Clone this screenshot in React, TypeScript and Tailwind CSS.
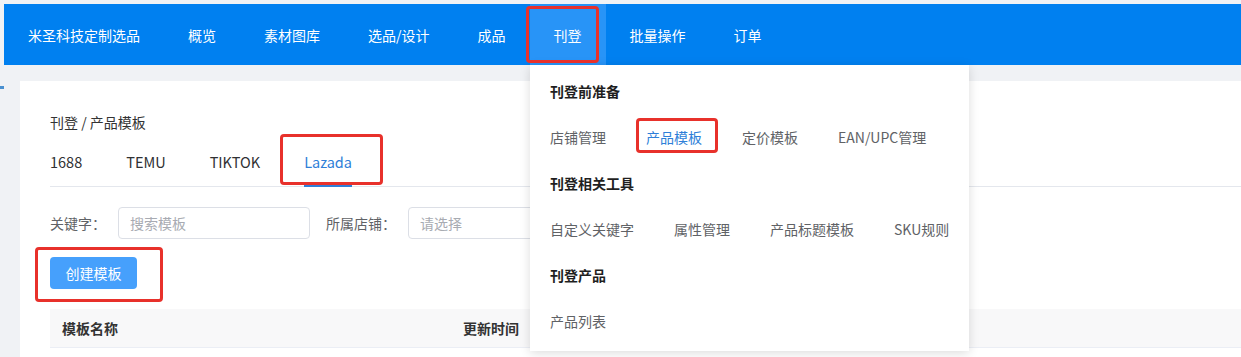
import React from 'react';

const navItems = ['概览', '素材图库', '选品/设计', '成品', '刊登', '批量操作', '订单'];
const platformTabs = ['1688', 'TEMU', 'TIKTOK', 'Lazada'];

const menuGroups = [
    { title: '刊登前准备', items: ['店铺管理', '产品模板', '定价模板', 'EAN/UPC管理'] },
    { title: '刊登相关工具', items: ['自定义关键字', '属性管理', '产品标题模板', 'SKU规则'] },
    { title: '刊登产品', items: ['产品列表'] },
];

// red annotation frame drawn over the screenshot
function Mark({ className }: { className: string }) {
    return <div className={`absolute border-[3px] border-[#e8312b] rounded-[4px] pointer-events-none ${className}`} />;
}

export default function App() {
    return (
        <div
            className="relative w-[1241px] h-[357px] overflow-hidden bg-[#f0f2f5] pt-1 text-[14px] leading-[20px] text-[#333]"
            style={{ fontFamily: '"Noto Sans CJK SC", "Noto Sans", sans-serif' }}
        >
            <header className="ml-1 h-[61px] bg-[#0080f0] flex items-stretch text-white">
                <div className="px-6 flex items-center">米圣科技定制选品</div>
                {navItems.map((item) => (
                    <div key={item} className={`px-6 flex items-center ${item === '刊登' ? 'bg-[#2894f7]' : ''}`}>
                        {item}
                    </div>
                ))}
            </header>

            <div className="flex">
                <div className="w-1 shrink-0">
                    <div className="mt-[21px] h-[3px] bg-[#4a90d0]" />
                </div>
                <div className="flex-1 pl-4 pt-4">
                    <div className="bg-white h-[300px] pl-[30px] pt-[31px]">
                        <div className="text-[#333]">刊登 / 产品模板</div>

                        <div className="mt-[10px] flex gap-[44px] border-b border-[#e4e7ed] text-[14.5px]">
                            {platformTabs.map((tab) => (
                                <div
                                    key={tab}
                                    className={`pt-[10px] pb-[13px] -mb-px border-b-2 ${tab === 'Lazada' ? 'text-[#2f7fd8] border-[#2f7fd8]' : 'text-[#303133] border-transparent'}`}
                                >
                                    {tab}
                                </div>
                            ))}
                        </div>

                        <div className="mt-[20px] flex items-center">
                            <span className="text-[#606266] mr-3">关键字：</span>
                            <div className="w-[192px] h-8 border border-[#dcdfe6] rounded-[4px] pl-[11px] flex items-center text-[#a8abb2]">搜索模板</div>
                            <span className="text-[#606266] ml-4 mr-3">所属店铺：</span>
                            <div className="w-[200px] h-8 border border-[#dcdfe6] rounded-[4px] pl-[11px] flex items-center text-[#a8abb2]">请选择</div>
                        </div>

                        <button className="block mt-[18px] h-8 w-[87px] rounded-[4px] bg-[#46a0fc] text-white">创建模板</button>

                        <div className="mt-[20px] h-[39px] bg-[#f8f8f9] border-b border-[#ebeef5] flex items-center font-bold text-[#333]">
                            <div className="pl-3 w-[413px]">模板名称</div>
                            <div>更新时间</div>
                        </div>
                    </div>
                </div>
            </div>

            {/* 刊登 dropdown menu */}
            <div className="absolute left-[530px] top-[65px] w-[439px] bg-white shadow-[0_2px_10px_rgba(0,0,0,0.14)] pl-5 pt-[3px] pb-[7px]">
                {menuGroups.map((group) => (
                    <div key={group.title}>
                        <div className="h-[46px] flex items-center font-bold text-[#1f1f1f]">{group.title}</div>
                        <div className="h-[46px] flex items-center gap-10 text-[#606266]">
                            {group.items.map((item) => (
                                <span key={item} className={item === '产品模板' ? 'text-[#2f7fd8]' : ''}>{item}</span>
                            ))}
                        </div>
                    </div>
                ))}
            </div>

            <Mark className="left-[526px] top-[6px] w-[73px] h-[57px]" />
            <Mark className="left-[280px] top-[134px] w-[103px] h-[51px]" />
            <Mark className="left-[636px] top-[118px] w-[82px] h-[35px]" />
            <Mark className="left-[35px] top-[247px] w-[128px] h-[55px]" />
        </div>
    );
}
